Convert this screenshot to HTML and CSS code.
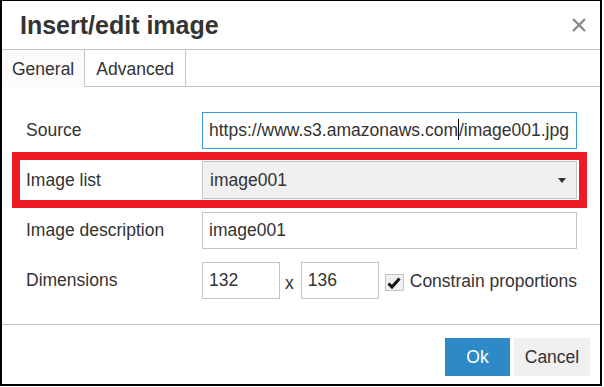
FILE: index.html
```html
<!DOCTYPE html>
<html lang="en">
<head>
    <meta charset="UTF-8">
    <meta name="viewport" content="width=device-width, initial-scale=1.0">
    <title>Insert/edit image</title>
    <link rel="stylesheet" href="styles.css">
</head>
<body>
    <div class="dialog">
        <header class="dialog-head">
            <h1>Insert/edit image</h1>
            <button class="close" aria-label="Close">
                <svg width="16" height="16" viewBox="0 0 16 16">
                    <path d="M2 2 L14 14 M14 2 L2 14" stroke="#858585" stroke-width="2.2" fill="none"/>
                </svg>
            </button>
        </header>

        <nav class="tabs">
            <div class="tab active">General</div>
            <div class="tab">Advanced</div>
        </nav>

        <div class="form">
            <div class="row">
                <label>Source</label>
                <div class="field focused">https://www.s3.amazonaws.com<span class="caret"></span>/image001.jpg</div>
            </div>

            <div class="row highlight">
                <label>Image list</label>
                <div class="field select">
                    <span>image001</span>
                    <span class="arrow"></span>
                </div>
            </div>

            <div class="row">
                <label>Image description</label>
                <div class="field">image001</div>
            </div>

            <div class="row">
                <label>Dimensions</label>
                <div class="field small">132</div>
                <span class="times">x</span>
                <div class="field small">136</div>
                <span class="checkbox">
                    <svg width="14" height="12" viewBox="0 0 14 12">
                        <path d="M1.5 6.5 L5 10 L12.5 1.5" stroke="#111" stroke-width="3" fill="none"/>
                    </svg>
                </span>
                <span class="check-label">Constrain proportions</span>
            </div>
        </div>

        <footer class="dialog-foot">
            <button class="btn primary">Ok</button>
            <button class="btn">Cancel</button>
        </footer>
    </div>
</body>
</html>
```

FILE: styles.css
```css
body {
    margin: 0;
    background-color: #fff;
    font-family: "Liberation Sans", Arial, sans-serif;
    font-size: 17.5px;
    color: #333;
}

.dialog {
    width: 602px;
    height: 386px;
    box-sizing: border-box;
    border: 2px solid #000;
    border-top-width: 1px;
    display: flex;
    flex-direction: column;
}

.dialog-head {
    flex-shrink: 0;
    height: 48px;
    border-bottom: 1px solid #c5c5c5;
    display: flex;
    align-items: center;
    justify-content: space-between;
    padding: 0 13px 0 18px;
}

h1 {
    margin: 0;
    font-size: 25px;
    font-weight: bold;
    color: #333;
}

.close {
    background: none;
    border: none;
    padding: 0;
    width: 16px;
    height: 16px;
    display: flex;
}

.tabs {
    flex-shrink: 0;
    height: 36px;
    border-bottom: 1px solid #c5c5c5;
    display: flex;
}

.tab {
    padding: 0 10px;
    line-height: 38px;
    border-right: 1px solid #c5c5c5;
    margin-bottom: -1px;
    border-bottom: 1px solid #c5c5c5;
}

.tab.active {
    background-color: #fbfbfb;
    border-bottom-color: #fbfbfb;
}

.tab:nth-child(2) {
    padding: 0 11px;
}

.form {
    flex: 1;
    padding: 25px 23px 0 24px;
}

.row {
    display: flex;
    align-items: center;
    height: 37px;
    margin-bottom: 13px;
}

.row label {
    width: 176px;
    flex-shrink: 0;
}

.field {
    flex: 1;
    height: 37px;
    box-sizing: border-box;
    border: 1px solid #c5c5c5;
    padding: 0 6px;
    line-height: 35px;
    white-space: nowrap;
    overflow: hidden;
}

.field.focused {
    border-color: #3d9ae0;
}

.caret {
    display: inline-block;
    width: 1px;
    height: 21px;
    background-color: #000;
    vertical-align: -4px;
}

.row.highlight {
    height: 38px;
    border: 8px solid #ed1c24;
    padding: 1px 2px 1px 6px;
    margin: -10px -10px 4px -14px;
}

.field.select {
    height: 38px;
    background-color: #f0f0f0;
    display: flex;
    justify-content: space-between;
    align-items: center;
    padding: 0 10px 0 7px;
}

.arrow {
    width: 0;
    height: 0;
    border-left: 4.5px solid transparent;
    border-right: 4.5px solid transparent;
    border-top: 5px solid #333;
}

.field.small {
    flex: 0 0 78px;
}

.times {
    margin: 0 7px 0 5px;
    padding-top: 6px;
}

.checkbox {
    flex-shrink: 0;
    width: 19px;
    height: 17px;
    box-sizing: border-box;
    border: 1px solid #c5c5c5;
    background-color: #f0f0f0;
    margin: 4px 6px 0 6px;
    display: flex;
    align-items: center;
    justify-content: center;
}

.check-label {
    white-space: nowrap;
    padding-top: 1px;
}

.dialog-foot {
    flex-shrink: 0;
    height: 46px;
    border-top: 1px solid #c5c5c5;
    display: flex;
    justify-content: flex-end;
    align-items: flex-start;
    gap: 4px;
    padding: 13px 10px 0 0;
}

.btn {
    font-family: inherit;
    font-size: 17.5px;
    height: 38px;
    width: 76px;
    border: none;
    background-color: #f0f0f0;
    color: #333;
    padding: 0;
}

.btn.primary {
    width: 65px;
    background-color: #2d8ac7;
    color: #fff;
}
```
